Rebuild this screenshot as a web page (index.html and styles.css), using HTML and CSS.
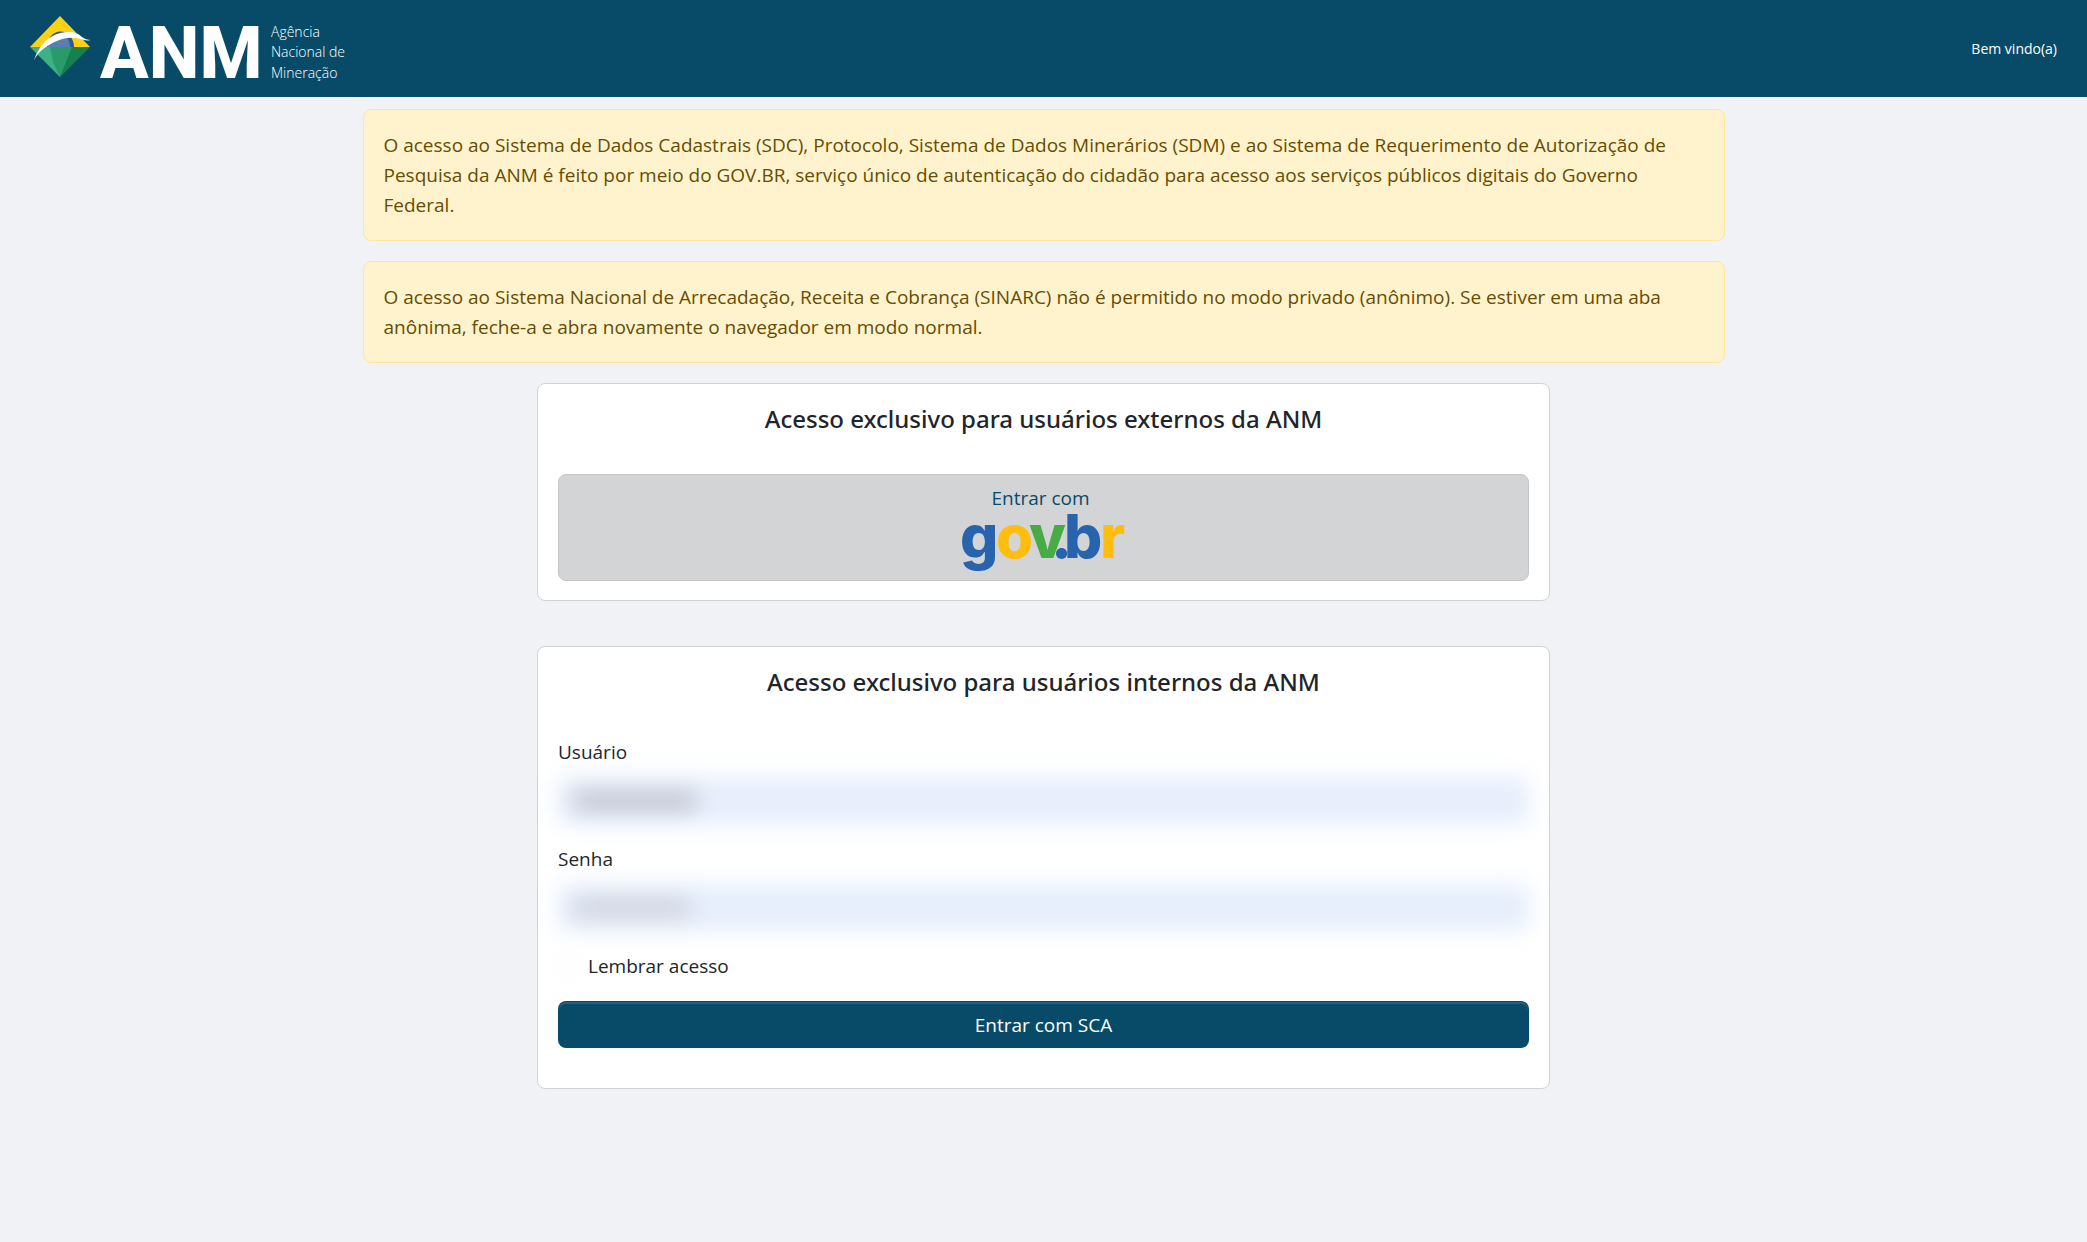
FILE: index.html
```html
<!DOCTYPE html>
<html lang="pt-BR">
<head>
<meta charset="utf-8">
<meta name="viewport" content="width=device-width, initial-scale=1">
<title>ANM - Acesso</title>
<link rel="stylesheet" href="styles.css">
</head>
<body>
<header class="topbar">
  <svg class="logo" width="320" height="70" viewBox="0 0 320 70" role="img" aria-label="ANM">
    <path fill="#fcd116" d="M30 2 60 33H0z"/>
    <path fill="#3cb184" d="M0 33h30v30z"/>
    <path fill="#2a9a6b" d="M20 33h25L30 63 23 48z"/>
    <path fill="#16814f" d="M42 33h18L30 63z"/>
    <path fill="#2d5a96" d="M17 33a13 15 0 0 1 27 0z"/>
    <path fill="#5580b0" d="M18 33a11 13 0 0 1 22 0z"/>
    <path fill="#fff" d="M4 46C9 32 20 18 38 18c7 0 11 2 14 5 3 2 5 3 9 3-4 1-7 0-11-1-7-2-14-2-23 2C17 31 9 37 4 46z"/>
    <text class="logo-word" x="70" y="64">ANM</text>
    <text class="logo-line" x="241" y="23">Agência</text>
    <text class="logo-line" x="241" y="43">Nacional de</text>
    <text class="logo-line" x="241" y="64">Mineração</text>
  </svg>
  <span class="welcome">Bem vindo(a)</span>
</header>
<main class="container">
  <div class="alert">O acesso ao Sistema de Dados Cadastrais (SDC), Protocolo, Sistema de Dados Minerários (SDM) e ao Sistema de Requerimento de Autorização de Pesquisa da ANM é feito por meio do GOV.BR, serviço único de autenticação do cidadão para acesso aos serviços públicos digitais do Governo Federal.</div>
  <div class="alert">O acesso ao Sistema Nacional de Arrecadação, Receita e Cobrança (SINARC) não é permitido no modo privado (anônimo). Se estiver em uma aba anônima, feche-a e abra novamente o navegador em modo normal.</div>
  <section class="card">
    <h1 class="card-title">Acesso exclusivo para usuários externos da ANM</h1>
    <button class="btn btn-gov" type="button">
      <span class="btn-gov-label">Entrar com</span>
      <svg class="govbr" width="164" height="60" viewBox="0 0 164 60" role="img" aria-label="gov.br">
        <text y="45"><tspan x="-2" fill="#2864ae">g</tspan><tspan x="34" fill="#ffbe0f">o</tspan><tspan x="67" fill="#48ab45">v</tspan><tspan x="89" fill="#2864ae">.</tspan><tspan x="102" fill="#2864ae">b</tspan><tspan x="138" fill="#ffbe0f">r</tspan></text>
      </svg>
    </button>
  </section>
  <section class="card card-internal">
    <h2 class="card-title">Acesso exclusivo para usuários internos da ANM</h2>
    <form class="form">
      <label for="usuario">Usuário</label>
      <input class="field field-user" id="usuario" type="text">
      <label for="senha">Senha</label>
      <input class="field field-pass" id="senha" type="password">
      <div class="check">
        <input class="check-box" id="lembrar" type="checkbox">
        <label for="lembrar">Lembrar acesso</label>
      </div>
      <button class="btn btn-primary" type="submit">Entrar com SCA</button>
    </form>
  </section>
</main>
</body>
</html>
```
FILE: styles.css
```css
* { box-sizing: border-box; }

body {
  margin: 0;
  background: #f0f2f6;
  color: #212529;
  font: 19px/30px "Open Sans", "Noto Sans", sans-serif;
}

.topbar {
  display: flex;
  align-items: center;
  justify-content: space-between;
  min-height: 97px;
  padding: 0 30px;
  background: #084b68;
  color: #fff;
}

.logo { display: block; overflow: visible; }
.logo-word { font: 800 72px Roboto, sans-serif; fill: #fff; }
.logo-line { font: 300 14px "Open Sans", sans-serif; fill: #fff; }
.welcome { font-size: 14px; }

.container {
  display: flex;
  flex-direction: column;
  align-items: center;
  gap: 20px;
  max-width: 1402px;
  margin: 0 auto;
  padding: 12px 20px 40px;
}

.alert {
  width: 100%;
  padding: 20px;
  border: 1px solid #ffe69c;
  border-radius: 8px;
  background: #fff3cd;
  color: #664d03;
}

.card {
  width: 100%;
  max-width: 1013px;
  padding: 20px 20px 19px;
  border: 1px solid #d0d2d4;
  border-radius: 8px;
  background: #fff;
}

.card-internal { margin-top: 25px; padding-bottom: 40px; }

.card-title {
  margin: 0 0 40px;
  font-family: "Noto Sans", sans-serif;
  font-size: 24px;
  line-height: 30px;
  font-weight: 500;
  text-align: center;
}

.btn {
  width: 100%;
  border: 1px solid transparent;
  border-radius: 8px;
  font: inherit;
}

.btn-gov {
  display: flex;
  flex-direction: column;
  align-items: center;
  padding: 8px 12px 7px;
  border-color: #c4c6c8;
  background: #d3d4d5;
  color: #084b68;
}

.btn-gov-label { line-height: 30px; margin-right: 6px; }

.govbr { display: block; overflow: visible; font: 800 60px Inter, sans-serif; }

.form { display: flex; flex-direction: column; }

.field {
  height: 47px;
  margin: 10px 0 20px;
  padding: 8px 15px;
  border: 0;
  border-radius: 8px;
  background: #e6eefc;
  font: inherit;
  filter: blur(11px);
}

.field-user { background: linear-gradient(#c2c7d2, #c2c7d2) 16px 13px / 122px 22px no-repeat #e6eefc; }
.field-pass { background: linear-gradient(#d0d5df, #d0d5df) 16px 13px / 116px 22px no-repeat #e6eefc; }

.check { display: flex; align-items: center; gap: 10px; margin-bottom: 20px; }

.check-box {
  appearance: none;
  width: 20px;
  height: 20px;
  margin: 0;
  border: 1px solid #eceff1;
  border-radius: 5px;
  filter: blur(6px);
}

.btn-primary {
  height: 47px;
  background: #084b68;
  box-shadow: inset 0 2px 0 #265f79;
  color: #fff;
}
```
